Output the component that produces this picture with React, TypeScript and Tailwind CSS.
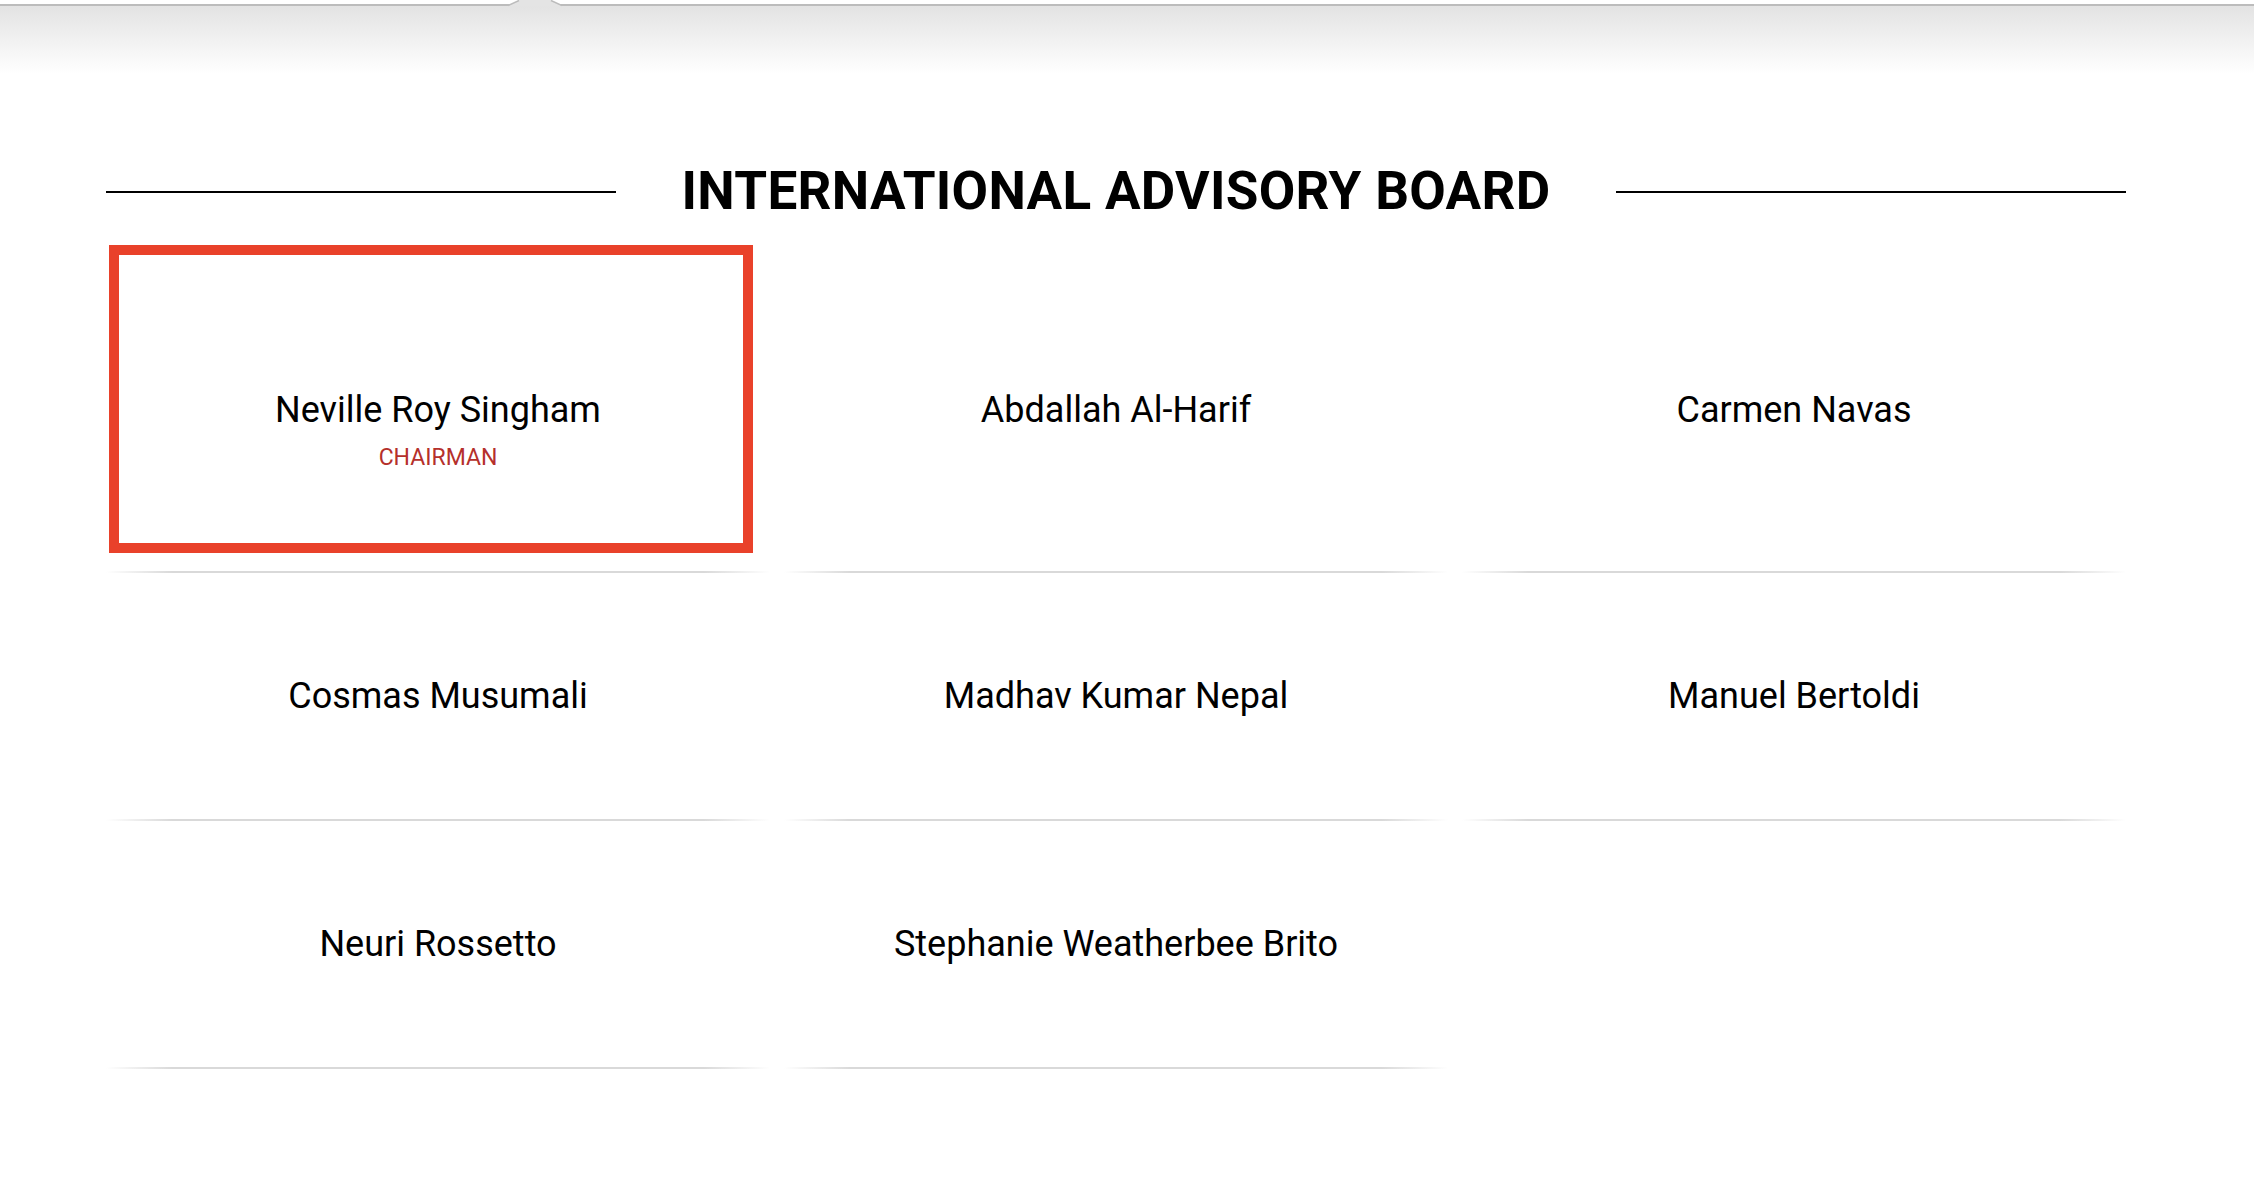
const members: { name: string; role?: string }[] = [
  { name: 'Neville Roy Singham', role: 'CHAIRMAN' },
  { name: 'Abdallah Al-Harif' },
  { name: 'Carmen Navas' },
  { name: 'Cosmas Musumali' },
  { name: 'Madhav Kumar Nepal' },
  { name: 'Manuel Bertoldi' },
  { name: 'Neuri Rossetto' },
  { name: 'Stephanie Weatherbee Brito' },
]

function MemberCell({ name, role, highlight }: { name: string; role?: string; highlight?: boolean }) {
  return (
    <div className="relative flex flex-col">
      <div className="flex flex-col items-center pt-[103px] pb-[103px]">
        <div className="text-[36px] leading-[40px] text-black">{name}</div>
        {role && (
          <div className="mt-[17px] text-[23px] leading-[21px] text-[#b5302b]">{role}</div>
        )}
      </div>
      <div className="mt-auto h-[2px] bg-[linear-gradient(to_right,rgba(217,217,217,0),#d9d9d9_10%,#d9d9d9_90%,rgba(217,217,217,0))]" />
      {highlight && (
        // selection outline drawn over the first card
        <div className="pointer-events-none absolute left-[3px] top-[-42px] h-[308px] w-[644px] border-[10px] border-[#e9412a]" />
      )}
    </div>
  )
}

export default function App() {
  return (
    <div className="min-h-screen bg-white font-['Roboto','Liberation_Sans',sans-serif]">
      {/* header edge */}
      <div className="relative">
        <div className="h-[4px] bg-white" />
        <div className="h-[2px] bg-[#bcbcbc]" />
        <div className="h-[68px] bg-gradient-to-b from-[#e3e3e3] to-white" />
        <svg className="absolute left-[508px] top-0" width="54" height="7" viewBox="0 0 54 7">
          <path d="M0 6 L11 0 L43 0 L54 6 Z" fill="#e4e4e4" />
          <path d="M0 5.5 L11 0.5 M43 0.5 L54 5.5" stroke="#bcbcbc" strokeWidth="1.5" fill="none" />
        </svg>
      </div>

      <div className="ml-[106px] w-[2020px] pt-[91px]">
        <div className="flex items-start gap-[66px]">
          <div className="mt-[26px] h-[2px] flex-1 bg-black" />
          <h1 className="text-[53px] leading-[53px] font-bold tracking-[0.3px] text-black">
            INTERNATIONAL ADVISORY BOARD
          </h1>
          <div className="mt-[26px] h-[2px] flex-1 bg-black" />
        </div>

        <div className="mt-[69px] grid grid-cols-3 gap-x-[14px]">
          {members.map((m, i) => (
            <MemberCell key={m.name} name={m.name} role={m.role} highlight={i === 0} />
          ))}
        </div>
      </div>
    </div>
  )
}
